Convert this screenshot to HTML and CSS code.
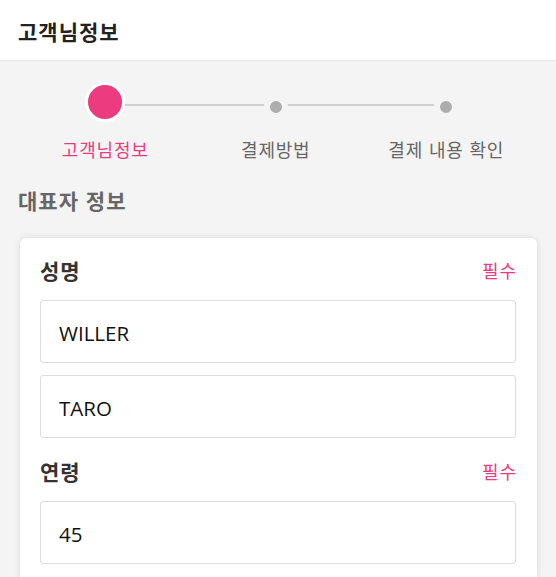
FILE: index.html
```html
<!DOCTYPE html>
<html lang="ko">
<head>
<meta charset="utf-8">
<title>고객님정보</title>
<link rel="stylesheet" href="styles.css">
</head>
<body>
<header class="top-bar">
  <h1 class="top-title">고객님정보</h1>
</header>
<main class="page">
  <section class="stepper">
    <div class="stepper-track">
      <div class="step-cell"><span class="marker marker-active"></span></div>
      <div class="step-cell"><span class="marker marker-dot"></span></div>
      <div class="step-cell"><span class="marker marker-dot"></span></div>
    </div>
    <div class="stepper-labels">
      <span class="step-label step-label-active">고객님정보</span>
      <span class="step-label">결제방법</span>
      <span class="step-label">결제 내용 확인</span>
    </div>
  </section>

  <h2 class="section-title">대표자 정보</h2>

  <section class="card">
    <div class="field">
      <div class="field-head">
        <span class="field-label">성명</span>
        <span class="field-required">필수</span>
      </div>
      <input class="text-input" type="text" value="WILLER">
      <input class="text-input" type="text" value="TARO">
    </div>
    <div class="field">
      <div class="field-head">
        <span class="field-label">연령</span>
        <span class="field-required">필수</span>
      </div>
      <input class="text-input" type="text" value="45">
    </div>
  </section>
</main>
</body>
</html>
```

FILE: styles.css
```css
* {
  box-sizing: border-box;
}

html, body {
  margin: 0;
  padding: 0;
}

body {
  background: #f4f4f4;
  font-family: "Open Sans", "Noto Sans CJK KR", sans-serif;
  color: #333;
}

.top-bar {
  height: 61px;
  background: #fff;
  border-bottom: 1px solid #e6e6e6;
  display: flex;
  align-items: center;
  padding: 2px 18px 0;
}

.top-title {
  margin: 0;
  font-family: "Noto Sans CJK KR", sans-serif;
  font-size: 21px;
  letter-spacing: 1px;
  font-weight: 700;
  color: #222;
  line-height: 28px;
}

.page {
  padding-top: 21px;
}

.stepper {
  padding: 0 24.5px 0 20px;
}

.stepper-track {
  position: relative;
  display: grid;
  grid-template-columns: repeat(3, 1fr);
  height: 40px;
}

.stepper-track::before {
  content: "";
  position: absolute;
  left: 16.667%;
  right: 16.667%;
  top: 22px;
  height: 2px;
  background: #d0d0d0;
}

.step-cell {
  display: flex;
  justify-content: center;
  align-items: flex-start;
  position: relative;
  z-index: 1;
}

.marker {
  display: block;
  border-radius: 50%;
}

.marker-active {
  width: 40px;
  height: 40px;
  background: #ec3b7e;
  border: 3.5px solid #fff;
}

.marker-dot {
  width: 24px;
  height: 24px;
  margin-top: 13px;
  background: #adadad;
  border: 6px solid #f4f4f4;
}

.stepper-labels {
  display: grid;
  grid-template-columns: repeat(3, 1fr);
  margin-top: 15px;
}

.step-label {
  text-align: center;
  font-family: "Noto Sans CJK KR", sans-serif;
  font-size: 18px;
  letter-spacing: 0.8px;
  line-height: 24px;
  color: #666;
}

.step-label-active {
  color: #ec3b7e;
}

.section-title {
  margin: 25px 0 0;
  padding-left: 18px;
  font-family: "Noto Sans CJK KR", sans-serif;
  font-size: 21px;
  letter-spacing: 1px;
  font-weight: 700;
  line-height: 28px;
  color: #666;
}

.card {
  margin: 24px 19px 0 20px;
  background: #fff;
  border-radius: 6px;
  box-shadow: 0 0 6px rgba(0, 0, 0, 0.12);
  padding: 18px 21px 20px 20px;
}

.field + .field {
  margin-top: 19px;
}

.field-head {
  display: flex;
  justify-content: space-between;
  align-items: center;
  height: 28px;
  margin-bottom: 16px;
}

.field-label {
  font-family: "Noto Sans CJK KR", sans-serif;
  font-size: 21px;
  letter-spacing: 1px;
  font-weight: 700;
  color: #333;
}

.field-required {
  font-family: "Noto Sans CJK KR", sans-serif;
  font-size: 18px;
  letter-spacing: 0.8px;
  margin-right: -0.8px;
  color: #ec3b7e;
}

.text-input {
  display: block;
  width: 100%;
  height: 63px;
  margin: 0;
  padding: 2px 18px 0;
  border: 1px solid #dcdcdc;
  border-radius: 3px;
  background: #fff;
  font-family: "Open Sans", "Noto Sans CJK KR", sans-serif;
  font-size: 20.5px;
  color: #111;
  outline: none;
}

.text-input + .text-input {
  margin-top: 12px;
}
```
